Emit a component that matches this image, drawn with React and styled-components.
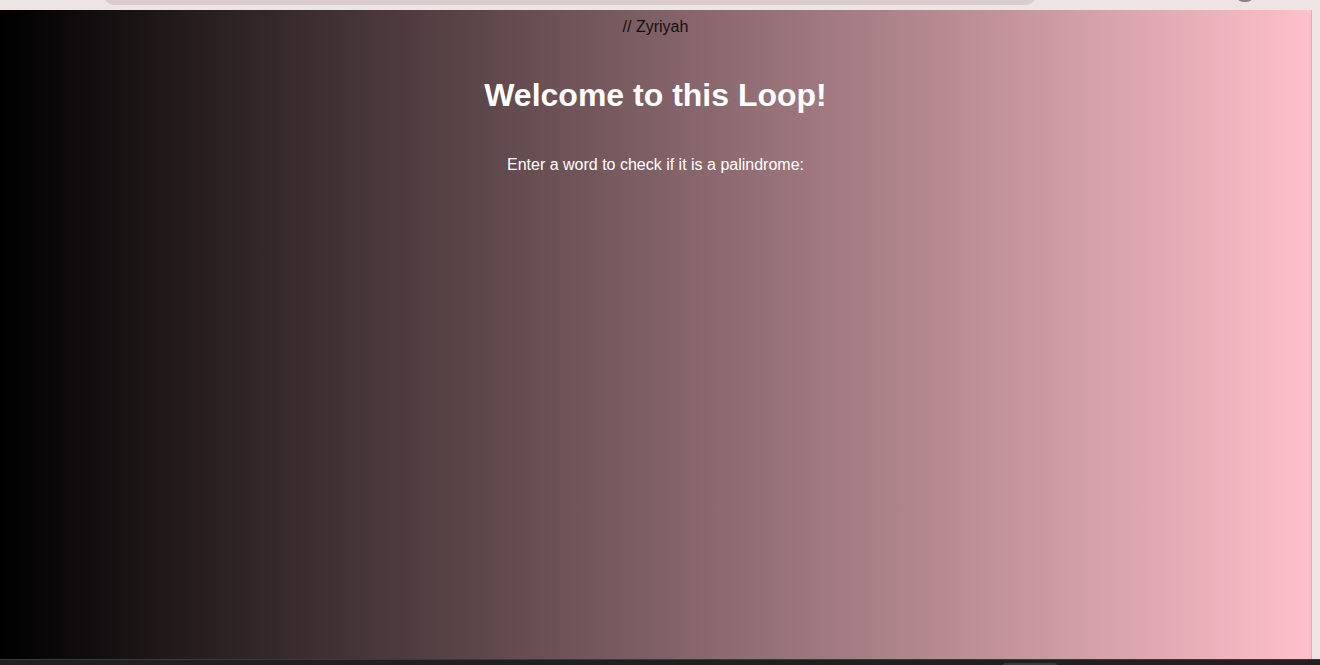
import React from 'react';
import styled, { createGlobalStyle } from 'styled-components';

const GlobalStyle = createGlobalStyle`
    html, body {
        margin: 0;
        padding: 0;
        height: 100%;
        overflow: hidden;
    }
    #root {
        height: 100%;
    }
`;

const Frame = styled.div`
    display: flex;
    flex-direction: column;
    width: 1320px;
    height: 665px;
    background: #efe4e4;
    font-family: "Liberation Sans", Arial, sans-serif;
`;

const TopChrome = styled.div`
    position: relative;
    height: 10px;
    flex: none;
    background: #efe4e4;
    overflow: hidden;
`;

const AddressBar = styled.div`
    position: absolute;
    left: 103px;
    top: -20px;
    width: 934px;
    height: 25px;
    border-radius: 0 0 12px 12px;
    background: #d9cccc;
`;

const ProfileDot = styled.div`
    position: absolute;
    left: 1237px;
    top: -7px;
    width: 16px;
    height: 9px;
    border-radius: 50%;
    background: #8a8080;
`;

const Middle = styled.div`
    display: flex;
    flex: 1;
    min-height: 0;
`;

const Viewport = styled.main`
    flex: 1;
    padding: 8px;
    background: linear-gradient(to right, #000000, #ffc0cb);
    text-align: center;
`;

const Gutter = styled.div`
    width: 8px;
    flex: none;
    border-left: 1px solid #c9b5b9;
    background: #efe4e4;
`;

const Credit = styled.p`
    margin: 0;
    font-size: 16px;
    line-height: 18px;
    color: #111;
`;

const Title = styled.h1`
    margin: 41px 0 0;
    font-size: 32px;
    line-height: 37px;
    font-weight: bold;
    color: #fff;
`;

const Prompt = styled.p`
    margin: 42px 0 0;
    font-size: 16px;
    line-height: 18px;
    color: #fff;
`;

const BottomBar = styled.div`
    position: relative;
    height: 6px;
    flex: none;
    background: #202020;
    border-top: 1px solid #3a3a3a;
    box-sizing: border-box;
`;

const TaskTab = styled.div`
    position: absolute;
    left: 1003px;
    top: 3px;
    width: 54px;
    height: 4px;
    border-radius: 2px 2px 0 0;
    background: #3c3c3c;
`;

export default function App() {
    return (
        <>
            <GlobalStyle />
            <Frame>
                <TopChrome>
                    <AddressBar />
                    <ProfileDot />
                </TopChrome>
                <Middle>
                    <Viewport>
                        <Credit>// Zyriyah</Credit>
                        <Title>Welcome to this Loop!</Title>
                        <Prompt>Enter a word to check if it is a palindrome:</Prompt>
                    </Viewport>
                    <Gutter />
                </Middle>
                <BottomBar>
                    <TaskTab />
                </BottomBar>
            </Frame>
        </>
    );
}
